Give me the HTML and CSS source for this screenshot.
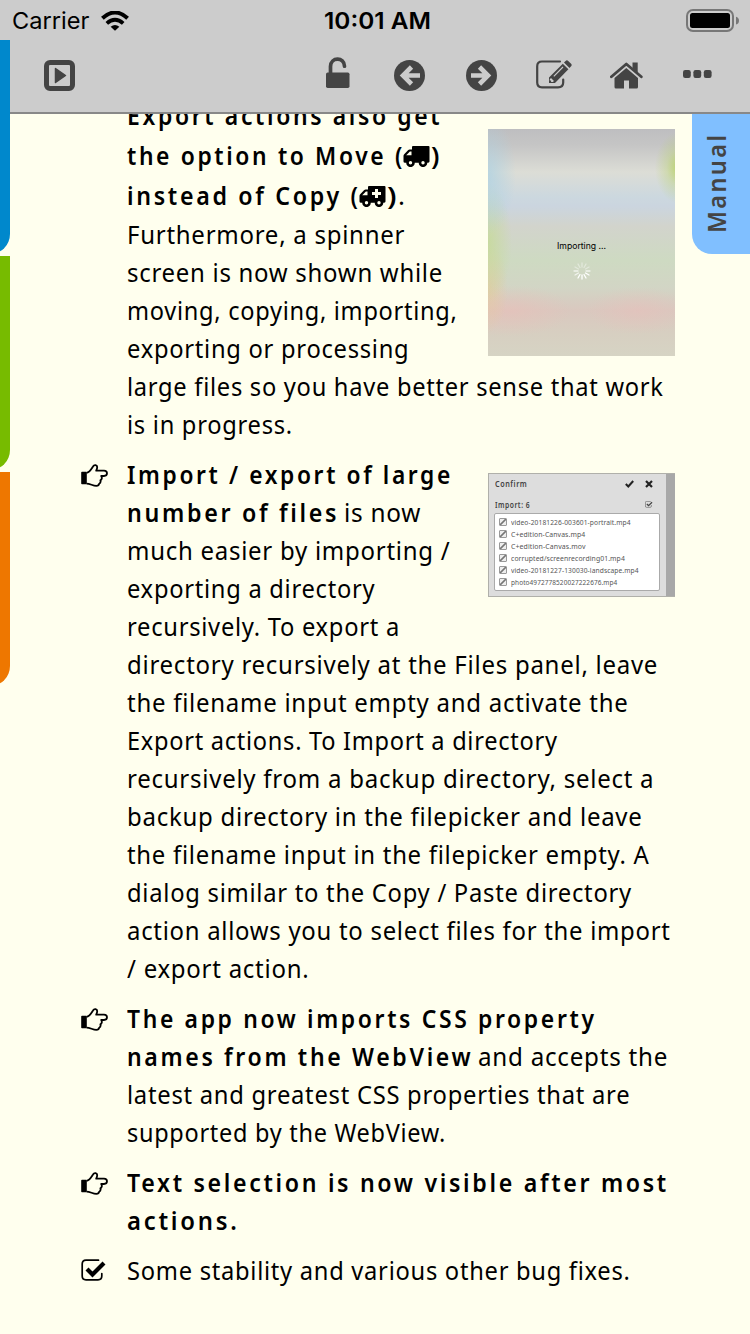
FILE: index.html
```html
<!DOCTYPE html>
<html lang="en">
<head>
<meta charset="utf-8">
<title>Manual</title>
<link rel="stylesheet" href="styles.css">
</head>
<body>
<svg class="defs" width="0" height="0">
  <symbol id="hand" viewBox="0 0 27 23">
    <path d="M1 8.500h4v11h-4z" fill="currentColor" stroke="currentColor" stroke-width="1.600" stroke-linejoin="round"/>
    <path d="M5.500 8.800C8.500 8.500 10 5.500 12 2.500c1.300-2.300 4.300-1.600 4.200.8 0 1.200-.5 2.400-1 3.400h7.800c4 0 4 5.300 0 5.300h-2.800c1.200 1.700.6 3.600-.8 4.300.5 1.600 0 2.800-1.200 3.400-.2 1.500-1.200 2.200-2.800 2.200-3.800 0-6-2.300-9.900-2.300" fill="none" stroke="currentColor" stroke-width="1.800" stroke-linejoin="round"/>
  </symbol>
  <symbol id="check" viewBox="0 0 26 23">
    <path d="M17.500 1.200H5Q1.200 1.200 1.200 5v12Q1.200 20.800 5 20.800H17Q20.800 20.800 20.800 17v-2.500" fill="none" stroke="currentColor" stroke-width="1.700" stroke-linecap="round"/>
    <path d="M6 10l5.500 5.500L23 4" fill="none" stroke="currentColor" stroke-width="4.200"/>
  </symbol>
  <symbol id="truck" viewBox="0 0 27 21">
    <path d="M10 0h15.500q1 0 1 1v14.500q0 1.300-2 1.300H2q-1.500 0-1.500-1.300V10q0-1 .7-1.800L5 4.300q.7-.8 1.700-.8H9V1q0-1 1-1z" fill="currentColor"/>
    <path d="M3.200 9.300h5.300V5.500H6.900z" fill="#ffffee"/>
    <circle cx="7.500" cy="16.800" r="3" fill="#ffffee" stroke="currentColor" stroke-width="2.600"/>
    <circle cx="20" cy="16.800" r="3" fill="#ffffee" stroke="currentColor" stroke-width="2.600"/>
  </symbol>
</svg>

<header class="top">
  <div class="status">
    <span class="carrier" data-w="77">Carrier</span>
    <svg class="wifi" width="28" height="20" viewBox="0 0 28 20"><g fill="none" stroke="#000"><path d="M1.400 7.300Q14-4.300 26.600 7.300" stroke-width="4"/><path d="M5.800 12.300Q14 5 22.200 12.300" stroke-width="3.800"/></g><path d="M14 19.800L9.600 15.700Q14 12.200 18.400 15.700z"/></svg>
    <span class="clock" data-w="107">10:01 AM</span>
    <svg class="battery" width="53" height="23" viewBox="0 0 53 23"><rect x="1" y="1" width="46" height="21" rx="6" fill="none" stroke="#777" stroke-width="2"/><rect x="4" y="4" width="40" height="15" rx="2.500"/><path d="M50 7.800q3 1 3 3.900t-3 3.900z" fill="#777"/></svg>
  </div>
  <nav class="tools">
    <svg class="run" width="31" height="31" viewBox="0 0 31 31"><rect x="2.500" y="2.500" width="26" height="26" rx="3.500" fill="none" stroke="currentColor" stroke-width="5"/><path d="M11.500 8.500l10 7-10 7z" fill="currentColor" stroke="currentColor" stroke-width="1.500" stroke-linejoin="round"/></svg>
    <svg class="lock" width="24" height="32" viewBox="0 0 24 32"><path d="M4.500 17V9.500C4.500-.3 18.500-.3 18.500 9.200" fill="none" stroke="currentColor" stroke-width="3.700" stroke-linecap="round"/><rect y="15.500" width="23.500" height="15.500" rx="1.700" fill="currentColor"/></svg>
    <svg class="back" width="31" height="31" viewBox="0 0 31 31"><circle cx="15.500" cy="15.500" r="15.500" fill="currentColor"/><path d="M17.500 7L9 15.500l8.500 8.500M9.500 15.500H26" fill="none" stroke="#ccc" stroke-width="4.600"/></svg>
    <svg class="next" width="31" height="31" viewBox="0 0 31 31"><circle cx="15.500" cy="15.500" r="15.500" fill="currentColor"/><path d="M13.500 7L22 15.500l-8.500 8.500M21.500 15.500H5" fill="none" stroke="#ccc" stroke-width="4.600"/></svg>
    <svg class="edit" width="37" height="29" viewBox="0 0 37 29"><path d="M24 1.500H6Q1.200 1.500 1.200 6.300V22.500Q1.200 27.300 6 27.300H22Q27.200 27.300 27.200 22.500V19.500" fill="none" stroke="currentColor" stroke-width="2.200" stroke-linecap="round"/><path d="M26.800 3.800l5.600 5.400L19 23h-6v-5.500zM28 2.500l1.600-1.600q1.300-1.200 2.600 0l2.900 2.900q1.100 1.200 0 2.500l-1.600 1.600z" fill="currentColor"/><path d="M17.800 16.300L27 7" stroke="#ccc" stroke-width="1.100"/><path d="M15 18l3 3-1.200 1h-1.700v-1.500h-1.300v-1.300z" fill="#ccc"/></svg>
    <svg class="home" width="33" height="27" viewBox="0 0 33 27"><path d="M1.400 14.800L16.300 2l15 12.800" fill="none" stroke="currentColor" stroke-width="2.800" stroke-linecap="round" stroke-linejoin="round"/><path d="M22.500.5h5.200v11l-5.200-4.300zM4.500 16L16.300 6 28 16v9q0 1.500-1.500 1.500H19v-8h-5v8H6Q4.500 26.500 4.500 25z" fill="currentColor"/></svg>
    <svg class="dots" width="29" height="8" viewBox="0 0 29 8"><g fill="currentColor"><rect width="7.800" height="8" rx="2.200"/><rect x="10.400" width="7.800" height="8" rx="2.200"/><rect x="20.800" width="7.800" height="8" rx="2.200"/></g></svg>
  </nav>
</header>

<aside class="rail"><i class="blue"></i><i class="green"></i><i class="orange"></i></aside>
<aside class="manual"><span data-w="98">Manual</span></aside>

<main class="page">
  <ul class="list">
    <li class="first">
      <div class="mark"></div>
      <div class="body">
        <figure class="spin">
          <span data-w="49">Importing ...</span>
          <svg width="18" height="18" viewBox="-9 -9 18 18"><g stroke="#fff" stroke-width="1.300" stroke-linecap="round"><path d="M0 4V8M2 3.500L4 7M-2 3.500L-4 7M3.500 2L7 4"/><path d="M-3.500 2L-7 4M4 0H8M-4 0H-8" opacity=".7"/><path d="M0-4V-8M2-3.500L4-7M-2-3.500L-4-7M3.500-2L7-4M-3.500-2L-7-4" opacity=".4"/></g></svg>
        </figure>
        <div class="line tall"><b data-w="313">Export actions also get</b></div>
        <div class="line tall"><b data-w="275">the option to Move (</b><svg class="truck"><use href="#truck"/></svg><b data-w="8">)</b></div>
        <div class="line tall"><b data-w="231">instead of Copy (</b><svg class="truck"><use href="#truck"/><path d="M17.500 3v9M13 7.500h9" stroke="#ffffee" stroke-width="3"/></svg><b data-w="9">)</b><span class="dot">.</span></div>
        <div class="line"><span data-w="277">Furthermore, a spinner</span></div>
        <div class="line"><span data-w="315">screen is now shown while</span></div>
        <div class="line"><span data-w="330">moving, copying, importing,</span></div>
        <div class="line"><span data-w="282">exporting or processing</span></div>
        <div class="line"><span data-w="536">large files so you have better sense that work</span></div>
        <div class="line"><span data-w="165">is in progress.</span></div>
      </div>
    </li>
    <li>
      <div class="mark"><svg class="hand"><use href="#hand"/></svg></div>
      <div class="body">
        <figure class="dialog">
          <div class="panel">
            <div class="row"><span class="grow"><span data-w="32">Confirm</span></span><svg width="9" height="8" viewBox="0 0 9 8"><path d="M.8 4l2.500 2.500L8.200 1" fill="none" stroke="#222" stroke-width="2"/></svg><svg class="x" width="8" height="8" viewBox="0 0 8 8"><path d="M1 1l6 6M7 1L1 7" stroke="#222" stroke-width="2.200"/></svg></div>
            <div class="row second"><span class="grow"><span data-w="35">Import: 6</span></span><svg class="x" width="8" height="7"><use href="#check"/></svg></div>
            <div class="files">
              <div><i></i><span data-w="120">video-20181226-003601-portrait.mp4</span></div>
              <div><i></i><span data-w="74">C+edition-Canvas.mp4</span></div>
              <div><i></i><span data-w="74">C+edition-Canvas.mov</span></div>
              <div><i></i><span data-w="114">corrupted/screenrecording01.mp4</span></div>
              <div><i></i><span data-w="128">video-20181227-130030-landscape.mp4</span></div>
              <div><i></i><span data-w="106">photo4972778520027222676.mp4</span></div>
            </div>
          </div>
        </figure>
        <div class="line"><b data-w="323">Import / export of large</b></div>
        <div class="line"><b data-w="210">number of files</b><span class="after" data-w="76">is now</span></div>
        <div class="line"><span data-w="323">much easier by importing /</span></div>
        <div class="line"><span data-w="248">exporting a directory</span></div>
        <div class="line"><span data-w="272">recursively. To export a</span></div>
        <div class="line"><span data-w="530">directory recursively at the Files panel, leave</span></div>
        <div class="line"><span data-w="501">the filename input empty and activate the</span></div>
        <div class="line"><span data-w="430">Export actions. To Import a directory</span></div>
        <div class="line"><span data-w="527">recursively from a backup directory, select a</span></div>
        <div class="line"><span data-w="515">backup directory in the filepicker and leave</span></div>
        <div class="line"><span data-w="522">the filename input in the filepicker empty. A</span></div>
        <div class="line"><span data-w="504">dialog similar to the Copy / Paste directory</span></div>
        <div class="line"><span data-w="543">action allows you to select files for the import</span></div>
        <div class="line"><span data-w="182">/ export action.</span></div>
      </div>
    </li>
    <li>
      <div class="mark"><svg class="hand"><use href="#hand"/></svg></div>
      <div class="body">
        <div class="line"><b data-w="467">The app now imports CSS property</b></div>
        <div class="line"><b data-w="344">names from the WebView</b><span class="after" data-w="189">and accepts the</span></div>
        <div class="line"><span data-w="503">latest and greatest CSS properties that are</span></div>
        <div class="line"><span data-w="318">supported by the WebView.</span></div>
      </div>
    </li>
    <li>
      <div class="mark"><svg class="hand"><use href="#hand"/></svg></div>
      <div class="body">
        <div class="line"><b data-w="539">Text selection is now visible after most</b></div>
        <div class="line"><b data-w="110">actions.</b></div>
      </div>
    </li>
    <li>
      <div class="mark"><svg class="check"><use href="#check"/></svg></div>
      <div class="body">
        <div class="line"><span data-w="503">Some stability and various other bug fixes.</span></div>
      </div>
    </li>
  </ul>
</main>
<script src="fit.js"></script>
</body>
</html>
```

FILE: styles.css
```css
* { box-sizing: border-box; }
body { margin: 0; width: 750px; height: 1334px; overflow: hidden; background: #ffffee; color: #000; font-family: "Noto Sans", sans-serif; display: grid; grid-template-rows: 114px 1fr; }
.defs { position: absolute; }
svg { display: block; flex: none; }
i { display: block; }
[data-w] { display: inline-block; white-space: nowrap; }
.fit { display: inline-block; transform-origin: 0 50%; white-space: pre; }

.top { background: #ccc; border-bottom: 2px solid #888; color: #444; }
.status { height: 40px; display: flex; align-items: center; padding: 1px 11px 0 12px; color: #000; font: 400 23px/40px Inter, sans-serif; }
.wifi { margin-left: 12px; }
.clock { margin-left: 195px; font-weight: 600; }
.battery { margin-left: auto; }
.tools { display: flex; align-items: center; height: 70px; padding-left: 44px; }
.lock { margin: -4px 0 0 251px; }
.back { margin-left: 44px; }
.next { margin-left: 41px; }
.edit { margin-left: 39px; margin-top: -1px; }
.home { margin-left: 37px; }
.dots { margin-left: 40px; margin-top: -2px; }

.rail { position: absolute; left: 0; top: 40px; width: 10px; overflow: hidden; display: flex; flex-direction: column; gap: 2px; }
.rail i { width: 58px; height: 214px; margin-left: -48px; border-radius: 0 0 20px 0; }
.blue { background: #0088cc; }
.green { background: #77bb00; }
.orange { background: #ee7700; }
.manual { position: absolute; right: 0; top: 114px; width: 58px; height: 140px; background: #80bfff; border-radius: 0 0 0 20px; display: flex; align-items: center; justify-content: center; color: #444; }
.manual > span { flex: none; transform: rotate(-90deg) translateX(0) translateY(-5px); font-size: 26px; line-height: 30px; font-weight: 600; letter-spacing: 2.5px; }

.page { overflow: hidden; min-height: 0; }
.list { list-style: none; margin: -19px 0 0; padding: 0 75px 0 81px; display: flex; flex-direction: column; gap: 12px; }
.list li { display: grid; grid-template-columns: 46px 1fr; }
.mark { padding-top: 9px; }
.hand { width: 27px; height: 23px; }
.check { width: 26px; height: 23px; }
.mark .check { margin-top: -1px; }
.line { height: 38px; line-height: 38px; font-size: 26px; white-space: nowrap; letter-spacing: .8px; }
.line.tall { height: 40px; line-height: 40px; }
.line b { font-weight: 600; letter-spacing: 3px; }
.truck { display: inline-block; width: 27px; height: 21px; margin: 0 1px; vertical-align: -2px; }
.dot { margin-left: 2px; }
.after { margin-left: 7px; }

figure { margin: 0; float: right; width: 187px; }
.spin { height: 227px; margin-top: 34px; display: flex; flex-direction: column; align-items: center; padding-top: 111px; font: 400 9px/12px Inter, sans-serif;
  background:
    radial-gradient(ellipse 24px 36px at 102% 17%, rgba(181,210,92,.85), rgba(181,210,92,.3) 50%, transparent),
    radial-gradient(ellipse 28px 60px at 0 20%, rgba(170,209,228,.7), transparent),
    radial-gradient(ellipse 24px 60px at 0 50%, rgba(198,219,151,.8), transparent),
    radial-gradient(ellipse 20px 45px at 0 70%, rgba(231,201,157,.7), transparent),
    radial-gradient(ellipse 60px 26px at 12% 80%, rgba(235,190,184,.5), transparent),
    radial-gradient(ellipse 50px 24px at 80% 80%, rgba(234,190,186,.45), transparent),
    linear-gradient(#bebec0, #c5c5c5 7%, #dcddd6 19%, #ccd8df 30%, #cbd5df 34%, #d2d4cc 43%, #cedac2 58%, #d2d5c5 70%, #dac8bf 80%, #d7cfc1 90%, #d6d4c4); }
.spin svg { margin-top: 10px; }
.dialog { height: 124px; margin-top: 18px; background: #a8a8a8; border: 1px solid #b0b0aa; border-right: 0; }
.panel { width: 177px; height: 122px; padding: 4px 6px 0; background: #ddd; color: #444; font: 600 8px/11px "Noto Sans", sans-serif; letter-spacing: .6px; }
.row { display: flex; align-items: center; height: 11px; }
.grow { flex: 1; }
.x { margin: 0 7px 0 11px; }
.row .check { width: 8px; height: 7px; }
.second { margin-top: 10px; }
.files { margin-top: 3px; height: 78px; width: 166px; margin-left: -1px; background: #fff; border: 1px solid #aaa; border-radius: 2px; padding: 2px 4px; font-weight: 400; font-size: 7.5px; letter-spacing: .1px; color: #555; }
.files div { display: flex; align-items: center; height: 12px; line-height: 12px; gap: 4px; }
.files i { width: 8px; height: 8px; border: 1px solid #999; border-radius: 1px; background: linear-gradient(135deg, #eee 35%, #777 45%, #777 55%, #eee 65%); }
```

FILE: fit.js
```js
document.querySelectorAll('[data-w]').forEach(function (el) {
  var inner = document.createElement('span');
  inner.className = 'fit';
  inner.textContent = el.textContent;
  el.textContent = '';
  el.appendChild(inner);
  var width = Number(el.dataset.w);
  var spacing = parseFloat(getComputedStyle(inner).letterSpacing) || 0;
  var natural = inner.offsetWidth - spacing;
  inner.style.transform = 'scaleX(' + width / natural + ')';
  el.style.width = width + 'px';
});
```
